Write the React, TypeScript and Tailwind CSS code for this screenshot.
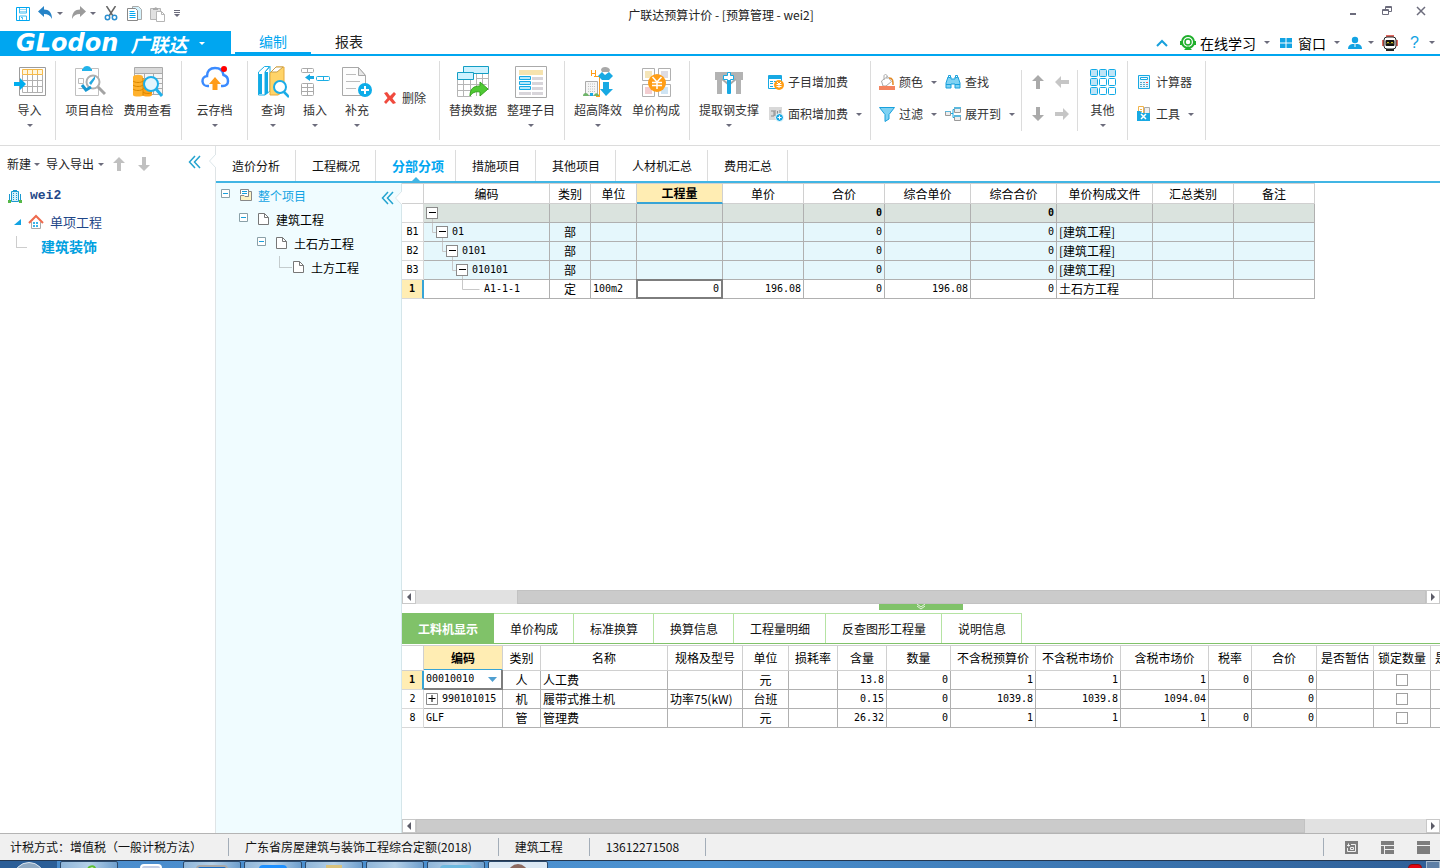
import { useState } from 'react';
import type { ReactNode } from 'react';

type IconProps = { children: ReactNode; size?: number; className?: string };

// svg wrapper, the drawing grid is always the same as the pixel size
function Icon({ children, size = 16, className = '' }: IconProps) {
  return (
    <svg width={size} height={size} viewBox={`0 0 ${size} ${size}`} fill="none" className={`shrink-0 ${className}`} aria-hidden="true">
      {children}
    </svg>
  );
}

function Caret({ className = 'text-[#6c6c7c]' }: { className?: string }) {
  return (
    <svg width="6" height="3" viewBox="0 0 6 3" className={`shrink-0 ${className}`} aria-hidden="true">
      <path d="M0 0h6L3 3z" fill="currentColor" />
    </svg>
  );
}

/* ---------- quick access icons ---------- */

const SaveIcon = () => (
  <Icon size={14}>
    <path d="M.5.5h13v13H.5z" stroke="#00a6f0" />
    <path d="M3.5 1v5h7V1M3.5 13V9h7v4M5 10.5h1.500v2" stroke="#3bbcf2" />
    <path d="M4 2.500h6M4 4.500h6" stroke="#9ad9f5" />
  </Icon>
);

const UndoIcon = ({ color }: { color: string }) => (
  <Icon size={15}>
    <path d="M0 5.500 6 0v3.500c5 0 8 3 8 9.500-1.500-3.500-4-5-8-5V11z" fill={color} />
  </Icon>
);

const RedoIcon = ({ color }: { color: string }) => (
  <Icon size={15}>
    <path d="M15 5.500 9 0v3.500c-5 0-8 3-8 9.500 1.500-3.500 4-5 8-5V11z" fill={color} />
  </Icon>
);

const CutIcon = () => (
  <Icon size={15}>
    <path d="M2.500 0 9 10M11.500 0 5 10" stroke="#666" strokeWidth="1.500" />
    <circle cx="3.500" cy="11.500" r="2.200" stroke="#2a8fd0" strokeWidth="1.500" />
    <circle cx="10.500" cy="11.500" r="2.200" stroke="#2a8fd0" strokeWidth="1.500" />
  </Icon>
);

const CopyIcon = () => (
  <Icon size={16}>
    <path d="M5.500 3V.5h6l3 3v10h-4" stroke="#aaa" fill="#d5f2fc" />
    <path d="M.5 2.500h8l2 2v10H.5z" stroke="#888" fill="#fff" />
    <path d="M2.500 5.500h5M2.500 7.500h6M2.500 9.500h6M2.500 11.500h6" stroke="#00a6f0" />
  </Icon>
);

const PasteIcon = () => (
  <Icon size={16}>
    <path d="M.5 2.500h10v11H.5z" fill="#e0e0e0" stroke="#b5b5b5" />
    <path d="M3 2h1.500a1.500 1.500 0 0 1 2.500 0h1v2H3z" fill="#aaa" />
    <path d="M6.500 5.500h5l3 3v7h-8z" fill="#fff" stroke="#b5b5b5" />
    <path d="M11.500 5.500v3h3" stroke="#b5b5b5" />
  </Icon>
);

/* ---------- ribbon icons, large ---------- */

const ImportIcon = () => (
  <Icon size={32}>
    <path d="M5.500 1.500h26v28h-26z" stroke="#9c9c9c" />
    <path d="M8.500 8.500h20v18h-20zM8.500 14.500h20M8.500 20.500h20M13.500 8v18M18.500 8v18M23.500 8v18" stroke="#b0b0b0" />
    <path d="M8.500 3.500h20v5h-20zM13.500 3v5M18.500 3v5M23.500 3v5" stroke="#f5b94a" fill="#fff6dc" />
    <path d="M0 16h6v-4l6 6-6 6v-4H0z" fill="#00aeef" />
  </Icon>
);

const CheckIcon = () => (
  <Icon size={32}>
    <path d="M1.500 2.500h23v27h-23z" stroke="#c0c0c0" />
    <path d="M9 3c0-4 8-4 8 0h1v2H8V3z" fill="#22b3ea" />
    <path d="M4.500 12.500h5v5h-5zM4.500 22.500h5" stroke="#bbb" />
    <circle cx="19" cy="16" r="6.500" stroke="#b0b0b0" strokeWidth="2" fill="#fff" />
    <path d="m24 21 7 7" stroke="#a4a4a4" strokeWidth="3" />
    <path d="m15 17 6-7v3l-4 6z" fill="#22a8e0" />
    <path d="m8 19 4 5 5-3" stroke="#1597d1" strokeWidth="3" />
  </Icon>
);

const CostIcon = () => (
  <Icon size={32}>
    <path d="M2.500 1.500h28v27h-28z" fill="#f5f5f5" stroke="#aaa" />
    <path d="M3 2h27v5H3z" fill="#d9d9d9" />
    <path d="M3 7.500h27M3 12.500h27M3 17.500h27M3 22.500h27M12.500 7v21M21.500 7v21" stroke="#aaa" />
    <path d="M1 11c0-3 10-3 10 0v18c0 2-10 2-10 0z" fill="#ffb22e" />
    <path d="M11 14c0-2 9-2 9 0v15c0 2-9 2-9 0z" fill="#ffa41c" />
    <path d="M1 15c2 2 8 2 10 0M1 19c2 2 8 2 10 0M1 23c2 2 8 2 10 0M11 22c2 2 8 2 9 0M11 26c2 2 8 2 9 0M11 12v18" stroke="#d98800" />
    <circle cx="19" cy="18" r="7" fill="#e4f6fd" stroke="#1eb0ea" strokeWidth="2" />
    <path d="m24 23 6 7" stroke="#1eb0ea" strokeWidth="3" />
  </Icon>
);

const CloudIcon = () => (
  <Icon size={32}>
    <path d="M10 20H9a5 5 0 0 1-1-10C8 5 11 2 16 2s8 3 8.500 7c4 1 4.500 4 4.500 6 0 3-2 5-5 5h-2" stroke="#3b8bff" strokeWidth="2.500" />
    <path d="m16 11 6 7h-3.500v6h-5v-6H10z" fill="#ff9c1a" />
    <circle cx="25" cy="3" r="3" fill="#f00" />
  </Icon>
);

const QueryIcon = () => (
  <Icon size={32}>
    <path d="m1.500 6 6-5.500h5L8 6v23H1.500zM8 6l5-5.500V25l-5 4" fill="#fff" stroke="#1caee4" />
    <path d="M2 8h3v20H2zM8 6h3v21l-3 2z" fill="#10aae6" />
    <path d="M13 7l6-6h8v24l-6 4h-8z" fill="#ffd468" stroke="#e4a93c" />
    <path d="m14 6 5-5h7l-6 5z" fill="#fff" stroke="#caa04a" />
    <circle cx="23" cy="21" r="6" fill="#fff" stroke="#1aace8" strokeWidth="2" />
    <path d="m27 26 5 5" stroke="#1aace8" strokeWidth="2.500" />
  </Icon>
);

const InsertIcon = () => (
  <Icon size={32}>
    <rect x="2.500" y="2.500" width="12" height="4" rx="1" stroke="#aaa" />
    <path d="M8.500 3v4" stroke="#aaa" />
    <path d="M15 11.500H9.500" stroke="#18a9e3" strokeWidth="3" />
    <path d="M11 8v7l-5-3.500z" fill="#18a9e3" />
    <rect x="17.500" y="10.500" width="13" height="4" rx="1" stroke="#1caee4" />
    <path d="M24.500 10.500v4" stroke="#1caee4" />
    <rect x="2.500" y="17.500" width="12" height="12" rx="1" stroke="#aaa" />
    <path d="M8.500 18v12M2.500 21.500h12M2.500 25.500h12" stroke="#aaa" />
  </Icon>
);

const SupplyIcon = () => (
  <Icon size={32}>
    <path d="M1.500 1.500h16l7 8v20h-23z" fill="#fdfdfd" stroke="#a8a8a8" />
    <path d="M17.500 1.500v8h7z" fill="#e8e8e8" stroke="#a8a8a8" />
    <path d="M5 8.500h10M5 15.500h14M5 22.500h10" stroke="#bcbcbc" />
    <circle cx="24" cy="24" r="7" fill="#0eade9" />
    <path d="M24 20v8M20 24h8" stroke="#fff" strokeWidth="2" />
  </Icon>
);

const ReplaceIcon = () => (
  <Icon size={32}>
    <path d="M6.500 7v23.500M13.500 14v16.500M19.500 7v23M25.500 7v14M.5 13.500v17h14M.5 18.500h29M.5 24.500h18M31.500 7v17M20 12.500h11" stroke="#b5b5b5" />
    <path d="M6.500.5h25v7h-25z" fill="#cdf2ff" stroke="#139ec4" />
    <path d="M.5 6.500h16v7H.5z" fill="#cdf2ff" stroke="#139ec4" />
    <path d="M13 30c0-7 3-10 10-10v-4l8 7-8 7v-4c-5-1-8 1-10 4z" fill="#4fc934" stroke="#35a51d" />
  </Icon>
);

const ArrangeIcon = () => (
  <Icon size={32}>
    <path d="M.5.5h31v31H.5z" stroke="#aaa" fill="#fff" />
    <path d="M4 4h24v5H4z" fill="#f6e3ae" />
    <path d="M4 11h12v3H4zM17 11h11v3H17zM17 16h11v3H17zM17 21h11v3H17zM4 26h12v3H4zM17 26h11v3H17z" fill="#d8d5da" />
    <path d="M4.500 10.500h11v3h-11zM4.500 15.500h11v3h-11zM4.500 20.500h11v3h-11z" fill="#b9e8fa" stroke="#15a9e5" />
  </Icon>
);

const HighriseIcon = () => (
  <Icon size={32}>
    <path d="M9.500 4v6M13.500 4v6M9.500 7.500h4M12 10.500h5M17.500 10v20M14 30.500h4" stroke="#ff9c1a" />
    <path d="M3.500 15.500h12v14h-12z" fill="#f5f5f5" stroke="#aaa" />
    <path d="M6 18h8M6 20.500h8M6 23h8M6 25.500h8" stroke="#c2c2c2" strokeDasharray="1 1" />
    <path d="M8 27h3v3H8z" fill="#18a9e3" />
    <path d="M1 30c0-4 5-4 6 0zM12 30c0-3 3-4 5-1v1z" fill="#6fb56a" />
    <path d="M19 4c0-4 8-4 9 0l-1 2h-7z" fill="#a8a8a8" />
    <path d="m20 6 3 3 4-3 4 4-4 4h-7l-4-4z" fill="#18a9e3" />
    <path d="M21 16h6v7h4l-7 7-6-7h3z" fill="#18a9e3" />
  </Icon>
);

const PriceIcon = () => (
  <Icon size={32}>
    <path d="M2.500 2.500h12v12h-12zM18.500 2.500h12v12h-12zM2.500 18.500h12v12h-12zM18.500 18.500h12v12h-12z" stroke="#b0b0b0" fill="#fff" />
    <path d="M5 5h7v7H5z" fill="#f5e5b8" />
    <path d="M21 5h7v7h-7z" fill="#dedbe2" />
    <path d="M5 21h7v7H5z" fill="#f3cdd0" />
    <path d="M21 21h7v7h-7z" fill="#cfe4f3" />
    <circle cx="17" cy="17" r="9" fill="#ff9e16" />
    <path d="m12.500 11 4.500 5 4.500-5M12 16.500h10M12 19.500h10M17 16v7" stroke="#fff" strokeWidth="1.500" />
  </Icon>
);

const SteelIcon = () => (
  <Icon size={32}>
    <path d="M2 6h28v8h-2v14h-5V14h-3v-3h-8v3H9v14H4V14H2z" fill="#b3b3b3" />
    <path d="m9 13 6 5M23 13l-6 5" stroke="#aaa" strokeWidth="2" />
    <path d="M14.500 6.500h3v3h3v4h-3v14h-3v-14h-4v-4h4z" fill="#fff" stroke="#18a9e3" />
    <path d="M16 14v14" stroke="#18a9e3" strokeWidth="2" />
  </Icon>
);

const OtherIcon = () => (
  <Icon size={32}>
    {[4, 13, 22].map((y) =>
      [4, 13, 22].map((x) => (
        <rect key={`${x}-${y}`} x={x - 0.5} y={y - 0.5} width="7" height="7" rx="1" stroke="#10aae6" fill={x === 4 || y === 4 ? '#bfe4f6' : '#fff'} />
      ))
    )}
  </Icon>
);

/* ---------- ribbon icons, small ---------- */

const SubFeeIcon = () => (
  <Icon>
    <path d="M.5 1.500h13v13H.5z" fill="#fff" stroke="#18a9e3" />
    <path d="M1 2h12v3H1z" fill="#18a9e3" />
    <path d="M2 7.500h3M6 7.500h3M2 9.500h3M2 12.500h3" stroke="#18a9e3" />
    <circle cx="11" cy="11" r="5" fill="#ff9e16" />
    <path d="m9 8 2 2 2-2M8.500 10.500h5M8.500 12.500h5M11 10v4" stroke="#fff" />
  </Icon>
);

const AreaFeeIcon = () => (
  <Icon>
    <path d="M1 1h13v13H1z" fill="#d9d9d9" />
    <path d="M3 5h3v5H3M7 4v6h5V4M9.500 5v5" stroke="#8d8d8d" />
    <circle cx="11.500" cy="11.500" r="4" fill="#18a9e3" stroke="#fff" />
    <path d="M11.500 9.500v4M9.500 11.500h4" stroke="#fff" />
  </Icon>
);

const ColorIcon = () => (
  <Icon>
    <path d="m2.500 7 6-4.500 4 5L7 12H4z" fill="#fff" stroke="#aaa" />
    <path d="M5 6V2c0-2 3-2 3 0v3" stroke="#aaa" />
    <path d="M10 4c4 0 4 3 4 7" stroke="#e38a26" strokeWidth="1.500" />
    <path d="M0 12h16v4H0z" fill="#f4845f" />
  </Icon>
);

const FilterIcon = () => (
  <Icon>
    <path d="M.5 1.500h15l-5.500 7V13l-4 2.500v-7z" fill="#7ed2f3" stroke="#18a0dc" />
  </Icon>
);

const FindIcon = () => (
  <Icon>
    <path d="M3 3h3v2h4V3h3l2 6v5h-5v-4H6v4H1V9z" fill="#7ed2f3" stroke="#18a0dc" />
    <path d="M3.500 1.500h2v2h-2zM10.500 1.500h2v2h-2z" fill="#fff" stroke="#18a0dc" />
    <path d="M1 10.500h5M10 10.500h5" stroke="#18a0dc" />
  </Icon>
);

const ExpandIcon = () => (
  <Icon>
    <path d="M5 7.500h3M8 3.500v8M8 11.500h2M8 3.500h2" stroke="#18a9e3" />
    <path d="M.5 5.500h5v4h-5zM9.500 1.500h6v5h-6zM9.500 9.500h6v5h-6z" fill="#eee" stroke="#999" />
    <path d="M9 1h7v2H9zM9 9h7v2H9zM0 5h6v1H0z" fill="#5cb8dd" />
  </Icon>
);

const CalcIcon = () => (
  <Icon>
    <path d="M2.500 1.500h11v13h-11z" fill="#e9f7fd" stroke="#18a9e3" />
    <path d="M4.500 3.500h7v2h-7z" fill="#fff" stroke="#18a9e3" />
    <path d="M4 8.500h2M7 8.500h2M4 10.500h2M7 10.500h2M4 12.500h2M7 12.500h2M10 10.500h2M10 12.500h2" stroke="#5aa9cc" />
    <path d="M10 8.500h2" stroke="#f55" />
  </Icon>
);

const ToolIcon = () => (
  <Icon>
    <path d="M2.500.5h5v8h-5z" fill="#fff" stroke="#f0b34a" />
    <path d="M8.500 1.500h5v7h-5z" fill="#eee" stroke="#aaa" />
    <path d="M4 3.500h2M4 5.500h2" stroke="#f0b34a" />
    <path d="M1 5h3l2 2h8v8H1z" fill="#18a9e3" />
    <path d="m5 8 5 5M10 8l-5 5" stroke="#fff" strokeWidth="1.500" />
  </Icon>
);

const ARROWS = {
  up: 'M8 1l6 6h-4v8H6V7H2z',
  down: 'M8 15l6-6h-4V1H6v8H2z',
  left: 'M1 8l6-6v4h8v4H7v4z',
  right: 'M15 8L9 2v4H1v4h8v4z',
};

function ArrowIcon({ dir, color }: { dir: keyof typeof ARROWS; color: string }) {
  return (
    <Icon>
      <path d={ARROWS[dir]} fill={color} />
    </Icon>
  );
}

function CollapseIcon() {
  return (
    <Icon size={14}>
      <path d="M7 1 1.500 7 7 13M12 1 6.500 7l5.500 6" stroke="#23a3cf" strokeWidth="1.500" />
    </Icon>
  );
}

const PageIcon = () => (
  <Icon size={14}>
    <path d="M1.500 1.500h6l4 4v7h-10z" fill="#fff" stroke="#777" />
    <path d="M7.500 1.500v4h4" stroke="#777" />
  </Icon>
);

/* ---------- ribbon pieces ---------- */

type BigProps = { icon: ReactNode; label: string; caret?: boolean; width?: string };

function BigButton({ icon, label, caret, width = 'w-[58px]' }: BigProps) {
  return (
    <button className={`flex shrink-0 flex-col items-center pt-[5px] ${width}`}>
      {icon}
      <span className="mt-1 text-xs leading-4 whitespace-nowrap">{label}</span>
      {caret && <span className="mt-[6px] flex"><Caret /></span>}
    </button>
  );
}

function SmallButton({ icon, label, caret }: { icon: ReactNode; label: string; caret?: boolean }) {
  return (
    <button className="flex h-4 items-center gap-1 text-xs leading-4 whitespace-nowrap">
      {icon}
      {label}
      {caret && <span className="ml-1 flex"><Caret /></span>}
    </button>
  );
}

function Group({ children, width, short }: { children: ReactNode; width: string; short?: boolean }) {
  return (
    <div className={`flex shrink-0 items-start border-r border-[#dcdcdc] ${short ? 'mt-[14px] h-[61px]' : 'mt-[5px] h-[79px]'} ${width}`}>
      {children}
    </div>
  );
}

function Ribbon() {
  return (
    <div className="flex h-[90px] shrink-0 items-start overflow-hidden border-b border-[#dcdcdc] text-[#333]">
      <Group width="w-14 justify-center pl-1">
        <BigButton icon={<ImportIcon />} label="导入" caret width="w-12" />
      </Group>
      <Group width="w-[126px] justify-center">
        <BigButton icon={<CheckIcon />} label="项目自检" />
        <BigButton icon={<CostIcon />} label="费用查看" />
      </Group>
      <Group width="w-[66px] justify-center">
        <BigButton icon={<CloudIcon />} label="云存档" caret />
      </Group>
      <Group width="w-48 pl-1">
        <BigButton icon={<QueryIcon />} label="查询" caret width="w-[42px]" />
        <BigButton icon={<InsertIcon />} label="插入" caret width="w-[42px]" />
        <BigButton icon={<SupplyIcon />} label="补充" caret width="w-[42px]" />
        <span className="pt-[29px] pl-1">
          <SmallButton
            icon={<Icon><path d="m2 3 3-1 3 4 4-4 2 2-3.500 4.500L14 13l-3 1-3.500-4L4 14l-2-2 3.500-4z" fill="#f04a3e" /></Icon>}
            label="删除"
          />
        </span>
      </Group>
      <Group width="w-[125px] justify-center">
        <BigButton icon={<ReplaceIcon />} label="替换数据" />
        <BigButton icon={<ArrangeIcon />} label="整理子目" caret />
      </Group>
      <Group width="w-[125px] justify-center">
        <BigButton icon={<HighriseIcon />} label="超高降效" caret />
        <BigButton icon={<PriceIcon />} label="单价构成" />
      </Group>
      <Group width="w-[181px] pl-1">
        <BigButton icon={<SteelIcon />} label="提取钢支撑" caret width="w-[70px]" />
        <div className="flex flex-col gap-4 pt-[13px] pl-1">
          <SmallButton icon={<SubFeeIcon />} label="子目增加费" />
          <SmallButton icon={<AreaFeeIcon />} label="面积增加费" caret />
        </div>
      </Group>
      <Group width="w-[151px] pl-2" short>
        <div className="grid grid-cols-[66px_auto] gap-y-4 pt-1">
          <SmallButton icon={<ColorIcon />} label="颜色" caret />
          <SmallButton icon={<FindIcon />} label="查找" />
          <SmallButton icon={<FilterIcon />} label="过滤" caret />
          <SmallButton icon={<ExpandIcon />} label="展开到" caret />
        </div>
      </Group>
      <Group width="w-14 justify-center" short>
        <div className="grid grid-cols-2 gap-x-2 gap-y-4 pt-1">
          <button aria-label="上移"><ArrowIcon dir="up" color="#aaa" /></button>
          <button aria-label="升级"><ArrowIcon dir="left" color="#c6c6c6" /></button>
          <button aria-label="下移"><ArrowIcon dir="down" color="#aaa" /></button>
          <button aria-label="降级"><ArrowIcon dir="right" color="#c6c6c6" /></button>
        </div>
      </Group>
      <Group width="w-[50px] justify-center">
        <BigButton icon={<OtherIcon />} label="其他" caret width="w-12" />
      </Group>
      <Group width="w-[78px] pl-2">
        <div className="flex flex-col gap-4 pt-[13px]">
          <SmallButton icon={<CalcIcon />} label="计算器" />
          <SmallButton icon={<ToolIcon />} label="工具" caret />
        </div>
      </Group>
    </div>
  );
}

/* ---------- title + brand ---------- */

function TitleBar() {
  return (
    <div className="flex h-[31px] shrink-0 items-start">
      <div className="flex h-[27px] flex-1 items-center pl-4 text-[#6c6c7c]">
        <button aria-label="保存"><SaveIcon /></button>
        <button aria-label="撤销" className="ml-2 flex items-center gap-1"><UndoIcon color="#2583c7" /><Caret /></button>
        <button aria-label="重做" className="ml-2 flex items-center gap-1"><RedoIcon color="#9b9b9b" /><Caret /></button>
        <button aria-label="剪切" className="ml-2"><CutIcon /></button>
        <button aria-label="复制" className="ml-2"><CopyIcon /></button>
        <button aria-label="粘贴" className="ml-[7px]"><PasteIcon /></button>
        <button aria-label="更多" className="ml-2 flex flex-col gap-px">
          <span className="h-px w-[6px] bg-[#6c6c7c]" />
          <span className="h-px w-[6px] bg-[#6c6c7c]" />
          <Caret />
        </button>
      </div>
      <h1 className="text-xs leading-[30px] text-[#222]">广联达预算计价 - [预算管理 - wei2]</h1>
      <div className="flex h-[22px] flex-1 items-center justify-end gap-6 pr-[14px]">
        <button aria-label="最小化"><Icon size={10}><path d="M2 8h6" stroke="#6c6c7c" strokeWidth="2" /></Icon></button>
        <button aria-label="还原"><Icon size={10}><path d="M3.500 3V.5h6v5H7M.5 3.500h6v5h-6zM.5 4.500h6M3 1.500h6" stroke="#6c6c7c" /></Icon></button>
        <button aria-label="关闭"><Icon size={10}><path d="m1 1 8 8M9 1 1 9" stroke="#6c6c7c" strokeWidth="1.500" /></Icon></button>
      </div>
    </div>
  );
}

function BrandBar() {
  return (
    <div className="flex h-[25px] shrink-0 border-b-2 border-[#00a6f0]">
      <button className="flex h-[25px] w-[231px] shrink-0 items-center bg-[#00a6f0] pl-4 text-white">
        <span className="font-[DejaVu_Sans,sans-serif] text-[24px] leading-[25px] font-bold italic">GLodon</span>
        <span className="ml-3 text-[19px] leading-[25px] font-bold italic">广联达</span>
        <span className="ml-3 flex"><Caret className="text-white" /></span>
      </button>
      <nav className="ml-1 flex text-sm leading-[21px]">
        <a href="#edit" className="w-[76px] border-b-2 border-[#00a6f0] text-center text-[#00a6f0]">编制</a>
        <a href="#report" className="w-[76px] text-center text-[#222]">报表</a>
      </nav>
      <div className="ml-auto flex h-[23px] items-center pr-[5px] text-sm text-black">
        <button aria-label="收起功能区">
          <Icon size={12}><path d="m1 9 5-5 5 5" stroke="#18a0dc" strokeWidth="2" /></Icon>
        </button>
        <button className="ml-3 flex items-center gap-1">
          <Icon>
            <circle cx="8" cy="7" r="6" stroke="#1faf2b" strokeWidth="2" />
            <circle cx="8" cy="7" r="3" stroke="#1faf2b" strokeWidth="1.500" />
            <path d="m4 15 4-4 4 4z" fill="#1faf2b" />
            <path d="M1 6v4M15 6v4" stroke="#1faf2b" strokeWidth="2" />
          </Icon>
          在线学习
          <span className="ml-1 flex"><Caret /></span>
        </button>
        <button className="ml-[10px] flex items-center gap-[6px]">
          <Icon size={12}><path d="M0 1h5.500v4.500H0zM6.500 1H12v4.500H6.500zM0 6.500h5.500V11H0zM6.500 6.500H12V11H6.500z" fill="#12a3e3" /></Icon>
          窗口
          <span className="ml-[2px] flex"><Caret /></span>
        </button>
        <button aria-label="账户" className="ml-2 flex items-center gap-[6px]">
          <Icon size={14}><circle cx="7" cy="4" r="3.200" fill="#12a3e3" /><path d="M0 13c0-4 3-5 5-5h4c2 0 5 1 5 5z" fill="#12a3e3" /><path d="M7 8v3" stroke="#fff" /></Icon>
          <Caret />
        </button>
        <button aria-label="助手" className="ml-2">
          <Icon>
            <path d="M4 1h8M1 5v6M15 5v6" stroke="#d9382c" strokeWidth="1.500" />
            <rect x="2" y="2" width="12" height="12" rx="3" fill="#fff" stroke="#222" />
            <rect x="3.500" y="5" width="9" height="6" rx="1" fill="#111" />
            <path d="M5 8.500 6 7l1 1.500M9 8.500 10 7l1 1.500" stroke="#e8d82e" />
            <path d="M4 15h8" stroke="#222" strokeWidth="2" />
          </Icon>
        </button>
        <button aria-label="帮助" className="ml-3 flex items-center gap-[10px]">
          <span className="font-[Liberation_Sans,sans-serif] text-base leading-5 text-[#12a3e3]">?</span>
          <Caret />
        </button>
      </div>
    </div>
  );
}

/* ---------- project side bar ---------- */

// small pointer cut in the right edge of a collapsible panel
function Notch() {
  return (
    <svg width="7" height="14" viewBox="0 0 7 14" className="absolute top-2 -right-px" aria-hidden="true">
      <path d="M7 0v14L0 7z" fill="#fff" />
      <path d="M7 0 .5 7 7 14" fill="none" stroke="#dce6ea" />
    </svg>
  );
}

function ProjectPanel() {
  return (
    <aside className="relative w-[216px] shrink-0 border-r border-[#dfe4e6]">
      <div className="flex h-9 items-center pl-[7px] text-xs text-[#222]">
        <button className="flex items-center gap-[3px]">新建<Caret /></button>
        <button className="ml-[6px] flex items-center gap-1">导入导出<Caret /></button>
        <button aria-label="上移项目" className="ml-[7px]"><ArrowIcon dir="up" color="#c0c0c0" /></button>
        <button aria-label="下移项目" className="ml-[9px]"><ArrowIcon dir="down" color="#c0c0c0" /></button>
        <button aria-label="收起" className="mr-[13px] mb-1 ml-auto"><CollapseIcon /></button>
      </div>
      <Notch />
      <ul className="pt-[2px] text-[#1f4788]">
        <li className="flex h-6 items-center gap-2 pl-2 font-[Liberation_Mono,monospace] text-[13px] font-bold">
          <Icon size={14}>
            <path d="M3.500 2.500h7v10h-7z" fill="#d6effa" stroke="#1b9ad0" />
            <path d="M5 1.500h4M1.500 5v8M12.500 5v8M5 4.500h1M8 4.500h1M5 6.500h1M8 6.500h1M5 8.500h1M8 8.500h1M5 10.500h1M8 10.500h1" stroke="#1b9ad0" />
            <path d="M0 11h3v3H0zM11 11h3v3h-3z" fill="#55b848" />
          </Icon>
          wei2
        </li>
        <li className="flex h-7 items-center pl-[14px] text-[13px]">
          <Icon size={7}><path d="M7 0v6H0z" fill="#12a3e3" /></Icon>
          <Icon size={16} className="ml-[7px]">
            <path d="M3.500 8v6.500h9V8" fill="#fff" stroke="#aaa" />
            <path d="M1 9l7-7 7 7" stroke="#ee6a4d" strokeWidth="2" />
            <path d="M5 8h2v2H5zM8 8h2v2H8zM5 11h2v2H5zM8 11h2v2H8z" fill="#3bb4ea" />
          </Icon>
          <span className="ml-[6px]">单项工程</span>
        </li>
        <li className="flex h-5 items-center pl-4 text-sm font-bold text-[#00a0e0]">
          <span className="mb-2 h-3 w-[11px] border-b border-l border-[#cdcdcd]" />
          <a href="#decoration" className="ml-[14px]">建筑装饰</a>
        </li>
      </ul>
    </aside>
  );
}

const projectTree = [
  { name: '整个项目', indent: 'pl-[5px]' },
  { name: '建筑工程', indent: 'pl-[23px]' },
  { name: '土石方工程', indent: 'pl-[41px]' },
  { name: '土方工程', indent: 'pl-[63px]' },
];

function StructureTree() {
  return (
    <aside className="relative w-[186px] shrink-0 border-r border-[#d5e6ea] bg-[#f0fcff]">
      <button aria-label="收起结构树" className="absolute top-2 right-[6px]"><CollapseIcon /></button>
      <Notch />
      <ul className="pt-px text-xs">
        {projectTree.map((node, i) => (
          <li key={node.name} className={`flex h-6 items-center ${node.indent} ${i === 0 ? 'text-[#12a3e3]' : 'text-black'}`}>
            {i < 3 ? (
              <button aria-label="折叠" className="mb-1 mr-[8px]">
                <Icon size={10}><path d="M.5.5h8v8h-8z" fill="#fff" stroke="#8aa0a8" /><path d="M2 4.500h5" stroke="#18a0dc" /></Icon>
              </button>
            ) : (
              <span className="mb-3 h-3 w-[13px] border-b border-l border-[#c4ccce]" />
            )}
            <span className="mb-[2px]">
              {i === 0 ? (
                <Icon size={14}>
                  <path d="M1.500 6V1.500h8V9" fill="#fff" stroke="#888" />
                  <path d="M3 3.500h5M3 5.500h5" stroke="#18a0dc" />
                  <path d="M9.500 3.500h3v9h-11v-5H5l1 1h3.500z" fill="#fdf3c4" stroke="#888" />
                </Icon>
              ) : (
                <PageIcon />
              )}
            </span>
            <span className="ml-[5px]">{node.name}</span>
          </li>
        ))}
      </ul>
    </aside>
  );
}

/* ---------- grids ---------- */

const sheetTabs = ['造价分析', '工程概况', '分部分项', '措施项目', '其他项目', '人材机汇总', '费用汇总'];
const detailTabs = ['工料机显示', '单价构成', '标准换算', '换算信息', '工程量明细', '反查图形工程量', '说明信息'];

const MONO = 'font-[DejaVu_Sans_Mono,monospace] text-[10px]';
const HEAD = 'border-r border-b border-[#d0d0d0] p-0 text-center font-normal whitespace-nowrap overflow-hidden';
const CELL = 'border-r border-b border-[#b0b0b0] px-[2px] py-0 whitespace-nowrap';
const NUM = `${CELL} ${MONO} text-right`;
const MARK = `border-r border-b border-[#d8d8d8] p-0 text-center ${MONO}`;
const MARK_ON = `border-r-2 border-b border-r-[#38a4d6] border-b-[#d8d8d8] bg-[#ffedb3] p-0 text-center font-bold ${MONO}`;

const mainCols = [
  { name: '', w: 'w-[22px]' },
  { name: '编码', w: 'w-[126px]' },
  { name: '类别', w: 'w-[41px]' },
  { name: '单位', w: 'w-[46px]' },
  { name: '工程量', w: 'w-[86px]' },
  { name: '单价', w: 'w-[81px]' },
  { name: '合价', w: 'w-[81px]' },
  { name: '综合单价', w: 'w-[86px]' },
  { name: '综合合价', w: 'w-[86px]' },
  { name: '单价构成文件', w: 'w-[96px]' },
  { name: '汇总类别', w: 'w-[81px]' },
  { name: '备注', w: 'w-[81px]' },
];

const mainRows = [
  { mark: '', code: '', kind: '', unit: '', price: '', total: '0', cPrice: '', cTotal: '0', file: '' },
  { mark: 'B1', code: '01', kind: '部', unit: '', price: '', total: '0', cPrice: '', cTotal: '0', file: '[建筑工程]' },
  { mark: 'B2', code: '0101', kind: '部', unit: '', price: '', total: '0', cPrice: '', cTotal: '0', file: '[建筑工程]' },
  { mark: 'B3', code: '010101', kind: '部', unit: '', price: '', total: '0', cPrice: '', cTotal: '0', file: '[建筑工程]' },
  { mark: '1', code: 'A1-1-1', kind: '定', unit: '100m2', price: '196.08', total: '0', cPrice: '196.08', cTotal: '0', file: '土石方工程' },
];

// branch lines and the fold box of one code cell
function Branch({ level }: { level: number }) {
  const x = level * 10;
  const leaf = level === 4;
  return (
    <svg width={leaf ? 54 : x + 12} height="18" className="shrink-0" fill="none" aria-hidden="true">
      {level > 0 && <path d={`M${x - 3.5} 0v9.500h${leaf ? 17 : 4}`} stroke="#c8c8c8" />}
      {!leaf && (
        <>
          <path d={`M${x + 6.5} 15v3`} stroke="#c8c8c8" />
          <rect x={x + 0.5} y="3.500" width="11" height="11" fill="#fff" stroke="#8a8a8a" />
          <path d={`M${x + 3} 8.500h7`} stroke="#000" />
        </>
      )}
    </svg>
  );
}

function MainGrid() {
  return (
    <table className="w-[913px] table-fixed border-separate border-spacing-0 text-xs leading-[18px] text-black">
      <colgroup>
        {mainCols.map((c) => <col key={c.name} className={c.w} />)}
      </colgroup>
      <thead>
        <tr className="h-[21px]">
          {mainCols.map((c) => (
            <th
              key={c.name}
              className={c.name === '工程量'
                ? 'border-t border-r border-b-2 border-[#d0d0d0] border-b-[#38a4d6] bg-[#ffedb3] p-0 text-center font-bold'
                : `border-t ${HEAD}`}
            >
              {c.name}
            </th>
          ))}
        </tr>
      </thead>
      <tbody>
        {mainRows.map((r, i) => (
          <tr key={r.mark} className={`h-[19px] ${i === 0 ? 'bg-[#dae3de]' : i < 4 ? 'bg-[#e5f7fc]' : 'bg-white'}`}>
            <td className={i === 4 ? MARK_ON : `bg-white ${MARK}`}>{r.mark}</td>
            <td className={`${CELL} ${MONO}`}>
              <span className="flex h-[18px] items-center gap-1"><Branch level={i} />{r.code}</span>
            </td>
            <td className={`${CELL} text-center`}>{r.kind}</td>
            <td className={`${CELL} ${MONO}`}>{r.unit}</td>
            {i === 4 ? (
              <td className={`relative ${NUM}`}>
                <input aria-label="工程量" defaultValue="0" className="absolute -top-px -right-px -bottom-px -left-px border-2 border-[#7d7d7d] bg-white pr-[2px] text-right outline-none" />
              </td>
            ) : (
              <td className={NUM} />
            )}
            <td className={NUM}>{r.price}</td>
            <td className={`${NUM} ${i === 0 ? 'font-bold' : ''}`}>{r.total}</td>
            <td className={NUM}>{r.cPrice}</td>
            <td className={`${NUM} ${i === 0 ? 'font-bold' : ''}`}>{r.cTotal}</td>
            <td className={CELL}>{r.file}</td>
            <td className={CELL} />
            <td className={CELL} />
          </tr>
        ))}
      </tbody>
    </table>
  );
}

const detailCols = [
  { name: '', w: 'w-[22px]' },
  { name: '编码', w: 'w-[79px]' },
  { name: '类别', w: 'w-[38px]' },
  { name: '名称', w: 'w-[127px]' },
  { name: '规格及型号', w: 'w-[75px]' },
  { name: '单位', w: 'w-[46px]' },
  { name: '损耗率', w: 'w-[49px]' },
  { name: '含量', w: 'w-[49px]' },
  { name: '数量', w: 'w-[64px]' },
  { name: '不含税预算价', w: 'w-[85px]' },
  { name: '不含税市场价', w: 'w-[85px]' },
  { name: '含税市场价', w: 'w-[88px]' },
  { name: '税率', w: 'w-[43px]' },
  { name: '合价', w: 'w-[65px]' },
  { name: '是否暂估', w: 'w-[57px]' },
  { name: '锁定数量', w: 'w-[57px]' },
  { name: '是否计价', w: 'w-[57px]' },
];

const detailRows = [
  { mark: '1', code: '00010010', kind: '人', name: '人工费', spec: '', unit: '元', amount: '13.8', nums: ['0', '1', '1', '1', '0', '0'] },
  { mark: '2', code: '990101015', kind: '机', name: '履带式推土机', spec: '功率75(kW)', unit: '台班', amount: '0.15', nums: ['0', '1039.8', '1039.8', '1094.04', '', '0'] },
  { mark: '8', code: 'GLF', kind: '管', name: '管理费', spec: '', unit: '元', amount: '26.32', nums: ['0', '1', '1', '1', '0', '0'] },
];

function DetailGrid() {
  return (
    <table className="w-[1086px] table-fixed border-separate border-spacing-0 text-xs leading-[18px] text-black">
      <colgroup>
        {detailCols.map((c) => <col key={c.name} className={c.w} />)}
      </colgroup>
      <thead>
        <tr className="h-[26px]">
          {detailCols.map((c) => (
            <th
              key={c.name}
              className={c.name === '编码'
                ? 'border-t border-r border-b-2 border-[#d0d0d0] border-b-[#38a4d6] bg-[#ffedb3] p-0 text-center font-bold'
                : `border-t ${HEAD}`}
            >
              {c.name}
            </th>
          ))}
        </tr>
      </thead>
      <tbody>
        {detailRows.map((r, i) => (
          <tr key={r.mark} className="h-[19px]">
            <td className={i === 0 ? MARK_ON : MARK}>{r.mark}</td>
            {i === 0 ? (
              <td className={`relative ${CELL} ${MONO}`}>
                <select aria-label="编码" className="absolute -top-px -right-px -bottom-px left-0 appearance-none border-r-2 border-b-2 border-[#7d7d7d] bg-white pl-[2px] outline-none">
                  <option>{r.code}</option>
                </select>
                <svg width="9" height="5" viewBox="0 0 9 5" className="pointer-events-none absolute top-[6px] right-[5px]" aria-hidden="true">
                  <path d="M0 0h9L4.500 5z" fill="#4f9fd0" />
                </svg>
              </td>
            ) : (
              <td className={`${CELL} ${MONO}`}>
                <span className="flex items-center gap-1">
                  {i === 1 && (
                    <button aria-label="展开" className="mb-px">
                      <Icon size={12}><path d="M.5.5h11v11H.5z" stroke="#8a8a8a" /><path d="M2.500 5.500h7M6 2v7" stroke="#000" /></Icon>
                    </button>
                  )}
                  {r.code}
                </span>
              </td>
            )}
            <td className={`${CELL} text-center`}>{r.kind}</td>
            <td className={CELL}>{r.name}</td>
            <td className={CELL}>{r.spec}</td>
            <td className={`${CELL} text-center`}>{r.unit}</td>
            <td className={CELL} />
            <td className={NUM}>{r.amount}</td>
            {r.nums.map((n, k) => <td key={k} className={NUM}>{n}</td>)}
            <td className={CELL} />
            <td className={CELL}>
              <input type="checkbox" aria-label={`锁定数量 ${r.name}`} className="mx-auto mb-px block size-3 appearance-none border border-[#a0a0a0] bg-white checked:bg-[#38a4d6]" />
            </td>
            <td className={CELL} />
          </tr>
        ))}
      </tbody>
    </table>
  );
}

function ScrollBar({ thumb }: { thumb: string }) {
  return (
    <div className="flex h-[14px] shrink-0 bg-[#e1e1e1]">
      <button aria-label="向左滚动" className="flex w-[14px] items-center justify-center border border-[#c8c8c8] bg-white">
        <Icon size={8}><path d="M6 0v8L2 4z" fill="#5c5c68" /></Icon>
      </button>
      <div className="flex-1"><div className={`h-[14px] border border-[#c2c2c2] bg-[#cbcbcb] ${thumb}`} /></div>
      <button aria-label="向右滚动" className="flex w-[14px] items-center justify-center border border-[#c8c8c8] bg-white">
        <Icon size={8}><path d="M2 0v8l4-4z" fill="#5c5c68" /></Icon>
      </button>
    </div>
  );
}

function DetailPanel() {
  const [tab, setTab] = useState('工料机显示');

  return (
    <section className="flex h-[229px] shrink-0 flex-col">
      <button aria-label="收起明细" className="mx-auto flex h-[6px] w-[84px] shrink-0 justify-center bg-[#80c269]">
        <svg width="10" height="6" viewBox="0 0 10 6" fill="none" aria-hidden="true">
          <path d="m1 0 4 3 4-3M1 2l4 3 4-3" stroke="#e6f5df" />
        </svg>
      </button>
      <div className="mt-[3px] flex h-[31px] shrink-0 border-b border-[#80c269] text-xs">
        {detailTabs.map((t) => (
          <button
            key={t}
            onClick={() => setTab(t)}
            className={`pt-px whitespace-nowrap ${t === tab
              ? 'bg-[#80c269] px-4 font-bold text-white'
              : 'border-t border-r border-[#b5e3a3] pr-[15px] pl-4 text-[#111]'}`}
          >
            {t}
          </button>
        ))}
      </div>
      <div className="mt-px min-h-0 flex-1 overflow-hidden">
        <DetailGrid />
      </div>
      <ScrollBar thumb="w-[88%]" />
    </section>
  );
}

function Workspace() {
  const [sheet, setSheet] = useState('分部分项');

  return (
    <main className="flex min-w-0 flex-1 flex-col">
      <div className="flex h-[37px] shrink-0 border-b-2 border-[#41b5e4] pt-1 text-xs">
        {sheetTabs.map((t) => (
          <button
            key={t}
            onClick={() => setSheet(t)}
            className={`relative border-r border-[#dcdcdc] pt-px pr-[15px] pl-4 whitespace-nowrap ${t === sheet ? 'w-20 px-[13px] text-[13px] font-bold text-[#00a6f0]' : 'text-[#111]'}`}
          >
            {t}
            {t === sheet && (
              <svg width="8" height="4" viewBox="0 0 8 4" className="absolute bottom-0 left-9" aria-hidden="true">
                <path d="M0 4 4 0l4 4z" fill="#41b5e4" />
              </svg>
            )}
          </button>
        ))}
      </div>
      <div className="flex min-h-0 flex-1">
        <StructureTree />
        <div className="flex min-w-0 flex-1 flex-col">
          <div className="min-h-0 flex-1 overflow-hidden"><MainGrid /></div>
          <ScrollBar thumb="ml-[10%]" />
          <DetailPanel />
        </div>
      </div>
    </main>
  );
}

/* ---------- bottom ---------- */

function StatusBar() {
  const item = 'flex h-[18px] items-center border-r border-[#a3adb8] pr-[26px] whitespace-nowrap';
  return (
    <footer className="flex h-[27px] shrink-0 items-center border-t border-[#b4b4b4] bg-[#f0f0f0] text-xs text-[#111]">
      <span className={`${item} pl-[10px]`}>计税方式：增值税（一般计税方法）</span>
      <span className={`${item} pl-4`}>广东省房屋建筑与装饰工程综合定额(2018)</span>
      <span className={`${item} pl-4`}>建筑工程</span>
      <span className={`${item} pl-4`}>13612271508</span>
      <div className="ml-auto flex h-[18px] items-center gap-[23px] border-l border-[#a3adb8] pr-[10px] pl-[21px]">
        <button aria-label="全屏"><Icon size={13}><path d="M0 0h13v13H0z" fill="#7d7d7d" /><path d="M2 4.500h3M3.500 2.500v3M6 3.500h4.500v7h-8V7M5.500 6.500h3v2h-3z" stroke="#f0f0f0" /></Icon></button>
        <button aria-label="分栏"><Icon size={13}><path d="M0 0h13v4H0zM0 5h3v8H0zM4 5h9v3H4zM4 9h9v4H4z" fill="#7d7d7d" /></Icon></button>
        <button aria-label="单栏"><Icon size={13}><path d="M0 0h13v4H0zM0 5h13v8H0z" fill="#7d7d7d" /></Icon></button>
      </div>
    </footer>
  );
}

function TaskBar() {
  const task = 'flex h-4 w-[58px] shrink-0 justify-center overflow-hidden rounded-t-[2px] border border-[#2c4a6c] bg-linear-to-r from-[#8fb5d8] via-[#b4d0e8] to-[#6f9fcd] pt-[3px]';
  return (
    <div className="flex h-2 shrink-0 items-start gap-[3px] overflow-hidden border-t border-[#23364f] bg-linear-to-r from-[#4b8dcd] via-[#4a90cf] to-[#2f5f97]">
      <span className="flex w-[57px] shrink-0 justify-center bg-[#2b5e97] pt-px"><span className="h-8 w-8 rounded-full border border-[#dbe6f0] bg-[#8fa9c2]" /></span>
      <span className={task}>
        <Icon><path d="M2 8c2-6 9-8 12-5l-2 5z" fill="#e9f5e4" /><path d="M7 3c4-3 8-2 7 3" stroke="#5cc02f" strokeWidth="2" /></Icon>
      </span>
      <span className="flex w-[59px] shrink-0 justify-center pt-[3px]"><span className="h-5 w-[22px] rounded-t border-2 border-white bg-[#c3cee6]" /></span>
      <span className={task}><span className="h-5 w-8 rounded-t-sm border-2 border-[#a9a9a9] bg-[#1d6fc4]" /></span>
      <span className={task}><span className="h-5 w-7 rounded-t-sm bg-[#1e90ff]" /></span>
      <span className={task}><span className="h-5 w-4 bg-[#d9c27c]" /></span>
      <span className={task} />
      <span className={task}><span className="h-5 w-8 rounded-t bg-[#6db9df]" /></span>
      <span className="flex h-4 w-[60px] shrink-0 justify-center rounded-t-[2px] border border-[#2c4a6c] bg-[#dbe8f4] pt-[2px]"><span className="h-6 w-5 rounded-full bg-[#8c6a60]" /></span>
      <span className="mt-[3px] mr-px ml-auto h-4 w-[14px] rounded-sm border border-[#8d0d0d] bg-[#e30613]" />
      <span className="h-4 w-[14px] border border-[#a9bdd0] bg-[#5d7fa6]" />
    </div>
  );
}

export default function App() {
  return (
    <div className="flex h-screen flex-col overflow-hidden bg-white font-['Noto_Sans_CJK_SC',sans-serif]">
      <TitleBar />
      <BrandBar />
      <Ribbon />
      <div className="flex min-h-0 flex-1">
        <ProjectPanel />
        <Workspace />
      </div>
      <StatusBar />
      <TaskBar />
    </div>
  );
}
